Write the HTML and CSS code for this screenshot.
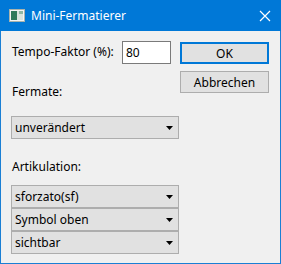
FILE: index.html
```html
<!DOCTYPE html>
<html>
<head>
<meta charset="utf-8">
<link rel="stylesheet" href="styles.css">
</head>
<body>
<div class="window">
  <div class="titlebar">
    <svg class="appicon" width="16" height="13" viewBox="0 0 16 13">
      <rect x="0.5" y="0.5" width="15" height="12" fill="#f4f4f4" stroke="#a9b3ad"/>
      <rect x="2" y="2" width="6" height="9" fill="#2f7a5a"/>
      <rect x="8" y="2" width="6" height="9" fill="#d9e4de"/>
      <rect x="10" y="2" width="4" height="3" fill="#8fb7a3"/>
    </svg>
    <span class="title">Mini-Fermatierer</span>
    <svg class="close" width="12" height="12" viewBox="0 0 12 12">
      <path d="M1 1 L11 11 M11 1 L1 11" stroke="#fff" stroke-width="1.2"/>
    </svg>
  </div>
  <div class="content">
    <div class="left">
      <div class="row">
        <span class="label tempo">Tempo-Faktor (%):</span>
        <div class="input">80</div>
      </div>
      <div class="label fermate">Fermate:</div>
      <div class="select single"><span>unverändert</span><svg class="arrow" width="7" height="4" viewBox="0 0 7 4"><polygon points="0,0 7,0 3.5,4" fill="#000"/></svg></div>
      <div class="label artik">Artikulation:</div>
      <div class="stack">
        <div class="select"><span>sforzato(sf)</span><svg class="arrow" width="7" height="4" viewBox="0 0 7 4"><polygon points="0,0 7,0 3.5,4" fill="#000"/></svg></div>
        <div class="select"><span>Symbol oben</span><svg class="arrow" width="7" height="4" viewBox="0 0 7 4"><polygon points="0,0 7,0 3.5,4" fill="#000"/></svg></div>
        <div class="select"><span>sichtbar</span><svg class="arrow" width="7" height="4" viewBox="0 0 7 4"><polygon points="0,0 7,0 3.5,4" fill="#000"/></svg></div>
      </div>
    </div>
    <div class="right">
      <div class="btn default">OK</div>
      <div class="btn">Abbrechen</div>
    </div>
  </div>
</div>
</body>
</html>
```
FILE: styles.css
```css
html, body {
  margin: 0;
  padding: 0;
}
body {
  width: 281px;
  height: 264px;
  overflow: hidden;
  font-family: "Noto Sans", "Open Sans", sans-serif;
  font-size: 12px;
  color: #000;
}
.window {
  box-sizing: border-box;
  width: 281px;
  height: 264px;
  border: 1px solid #1a7fd4;
  border-top: none;
  background: #f0f0f0;
}
.titlebar {
  height: 31px;
  margin: 0 -1px;
  background: #0078d7;
  display: flex;
  align-items: center;
  color: #fff;
}
.appicon {
  margin-left: 9px;
}
.title {
  margin-left: 6px;
  font-size: 12px;
  flex: 1;
}
.close {
  margin-right: 10px;
}
.content {
  display: flex;
  padding: 10px 0 0 10px;
}
.left {
  width: 168px;
}
.right {
  margin-left: 1px;
  padding-top: 1px;
  display: flex;
  flex-direction: column;
  gap: 7px;
}
.row {
  display: flex;
  align-items: center;
  height: 22px;
}
.label {
  line-height: 16px;
  padding-left: 1px;
}
.tempo {
  width: 110px;
}
.input {
  box-sizing: border-box;
  width: 49px;
  height: 23px;
  border: 1px solid #7a7a7a;
  background: #fff;
  line-height: 21px;
  padding-left: 3px;
}
.fermate {
  margin-top: 21px;
}
.single {
  margin-top: 16px;
}
.artik {
  margin-top: 20px;
}
.stack {
  margin-top: 10px;
}
.select {
  box-sizing: border-box;
  height: 23px;
  border: 1px solid #adadad;
  background: #e1e1e1;
  display: flex;
  align-items: center;
  padding-left: 3px;
  padding-right: 5px;
}
.select span {
  flex: 1;
}
.arrow {
  display: block;
}
.btn {
  box-sizing: border-box;
  width: 89px;
  height: 22px;
  border: 1px solid #adadad;
  background: #e1e1e1;
  display: flex;
  align-items: center;
  justify-content: center;
}
.btn.default {
  border: 2px solid #0078d7;
}
```
